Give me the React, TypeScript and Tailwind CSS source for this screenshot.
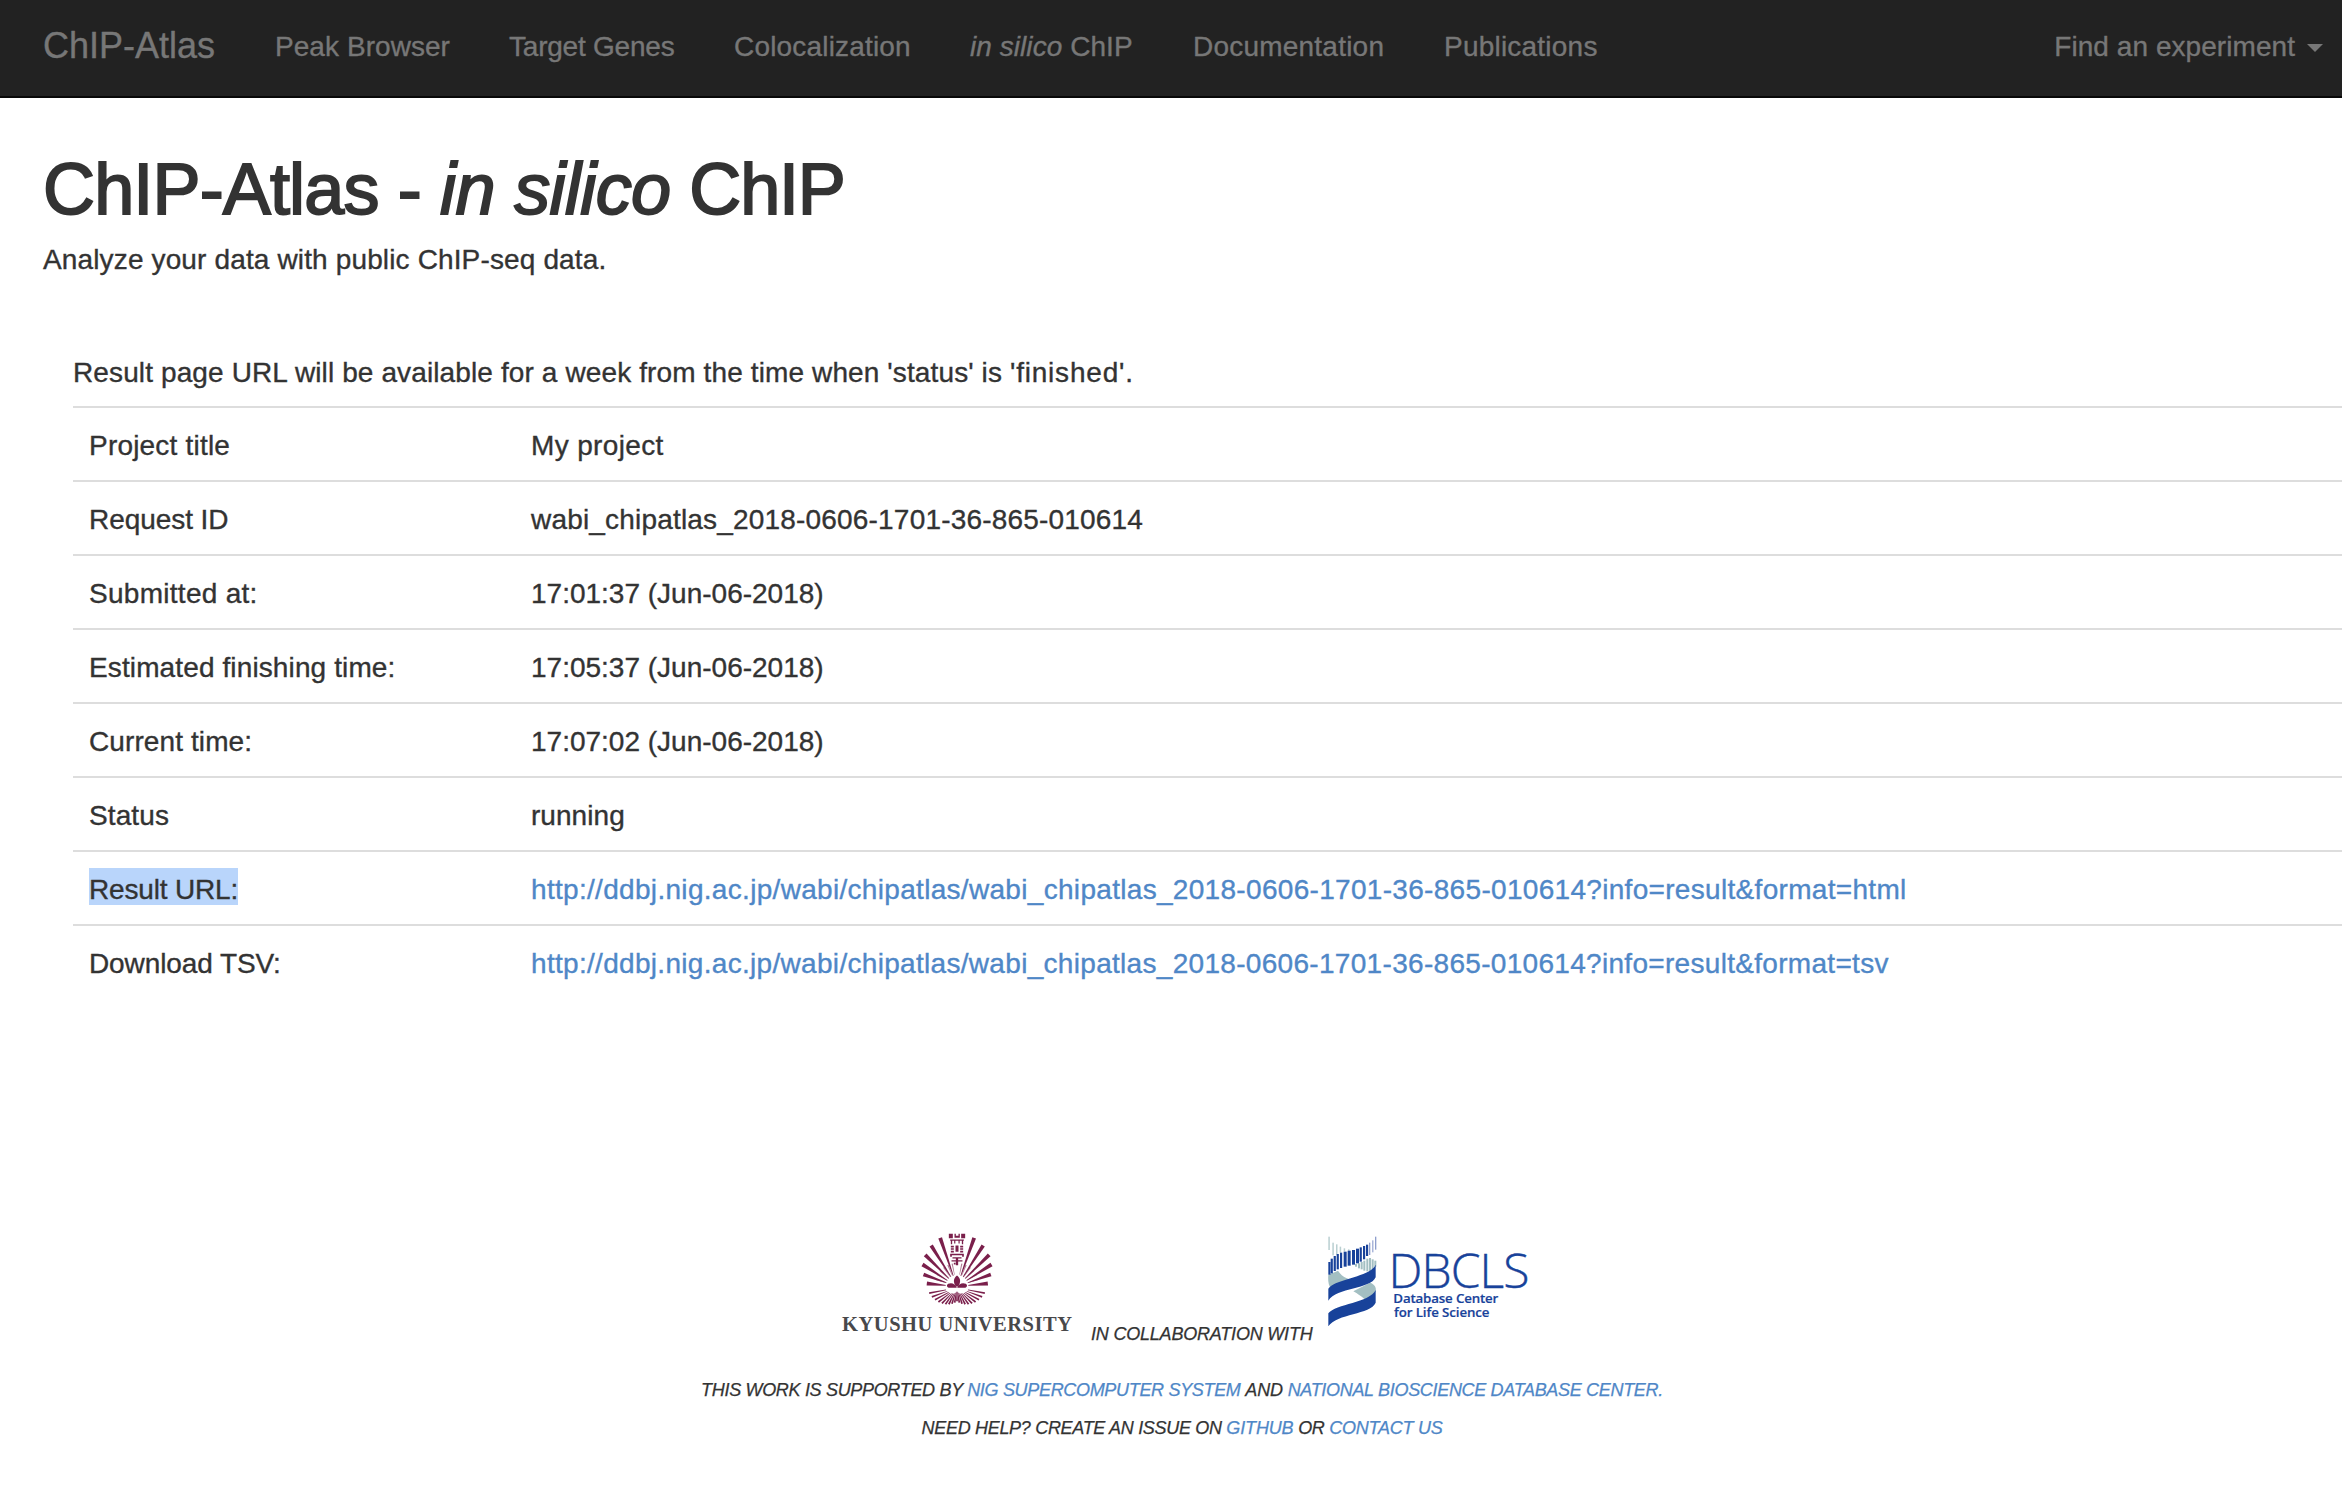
import React from "react";

const MAROON = "#7a1f4b";
const BLUE = "#18429a";
const TEAL = "#a3bfc2";

const navItems: { label: React.ReactNode; cls: string }[] = [
  { label: "Peak Browser", cls: "w-[174px] tracking-[0.06px]" },
  { label: "Target Genes", cls: "w-[165px] tracking-[-0.22px]" },
  { label: "Colocalization", cls: "w-[176px] tracking-[0.18px]" },
  { label: (<><i>in silico</i> ChIP</>), cls: "w-[163px] tracking-[0.06px]" },
  { label: "Documentation", cls: "w-[191px] tracking-[0.22px]" },
  { label: "Publications", cls: "w-[154px] tracking-[0.22px]" },
];

const RESULT_URL = "http://ddbj.nig.ac.jp/wabi/chipatlas/wabi_chipatlas_2018-0606-1701-36-865-010614?info=result&format=";

const rows: { name: string; nameCls: string; value: string; valueCls: string; link?: boolean; selected?: boolean }[] = [
  { name: "Project title", nameCls: "tracking-[0.2px]", value: "My project", valueCls: "tracking-[0.35px]" },
  { name: "Request ID", nameCls: "tracking-[-0.06px]", value: "wabi_chipatlas_2018-0606-1701-36-865-010614", valueCls: "tracking-[0.186px]" },
  { name: "Submitted at:", nameCls: "tracking-[0.28px]", value: "17:01:37 (Jun-06-2018)", valueCls: "" },
  { name: "Estimated finishing time:", nameCls: "tracking-[0.12px]", value: "17:05:37 (Jun-06-2018)", valueCls: "" },
  { name: "Current time:", nameCls: "tracking-[0.1px]", value: "17:07:02 (Jun-06-2018)", valueCls: "" },
  { name: "Status", nameCls: "tracking-[0.1px]", value: "running", valueCls: "tracking-[0.05px]" },
  { name: "Result URL:", nameCls: "tracking-[-0.17px]", value: RESULT_URL + "html", valueCls: "tracking-[0.31px]", link: true, selected: true },
  { name: "Download TSV:", nameCls: "tracking-[-0.1px]", value: RESULT_URL + "tsv", valueCls: "tracking-[0.307px]", link: true },
];

function Link({ children, className = "" }: { children: React.ReactNode; className?: string }) {
  return <a href="#" className={`text-[#4f87c7] ${className}`}>{children}</a>;
}

/* Tapered ray pointing from (cx, cy) to a tip; units are a third of a pixel. */
function ray(cx: number, cy: number, tx: number, ty: number, start: number, w0: number, w1: number) {
  const dx = tx - cx;
  const dy = ty - cy;
  const len = Math.hypot(dx, dy);
  const ux = dx / len;
  const uy = dy / len;
  const sx = cx + ux * start;
  const sy = cy + uy * start;
  const p = (x: number, y: number, w: number) => `${(x - uy * w).toFixed(1)},${(y + ux * w).toFixed(1)}`;
  return [p(sx, sy, w0), p(tx, ty, w1), p(tx, ty, -w1), p(sx, sy, -w0)].join(" ");
}

const tips: [number, number][] = [
  [52, 177], [42, 150], [39, 120], [47, 91], [65, 63], [92, 40],
  [194, 40], [221, 63], [239, 91], [246, 120], [244, 150], [235, 177],
];

function KyushuLogo() {
  return (
    <svg width="250" height="115" viewBox="835 1225 250 115" role="img" aria-label="Kyushu University" className="not-italic">
      <g transform="translate(910.5 1224.5) scale(0.33333)" fill={MAROON}>
        {tips.map(([x, y], i) => (
          <polygon key={i} points={ray(142.5, 186, x, y, 34, 1, 5.8)} />
        ))}
        {[-72, -59, -47, -35, -23, -12, 12, 23, 35, 47, 59, 72].map((a) => {
          const r = (a * Math.PI) / 180;
          return <polygon key={a} opacity="0.6" points={ray(142.5, 186, 142.5 + Math.sin(r) * 70, 186 - Math.cos(r) * 70, 36, 0.8, 1.8)} />;
        })}
        {Array.from({ length: 19 }, (_, i) => {
          const k = i - 9;
          const a = (k * 8.8 * Math.PI) / 180;
          const r = 40 + Math.abs(k) * 5;
          return <polygon key={i} points={ray(142.5, 190, 142.5 + Math.sin(a) * r, 190 + Math.cos(a) * r, 11 + Math.abs(k) * 2.5, 1, 2.7)} />;
        })}
        {/* tower */}
        <path d="M118 28h12v13h-12zM155 28h12v13h-12zM135 28h4v6h8v-6h4v12h-16z" />
        <path d="M122 45h41v3.500h-41zM124 48h4v11h-4zM157 48h4v11h-4zM134 48h3.500v9h-3.500zM147 48h3.500v9h-3.500z" />
        <path d="M124 64h9v5h-9zM138 63h9v19h-9zM152 64h9v5h-9zM124 71h9v5h-9zM152 71h9v5h-9zM124 79h9v5h-9zM152 79h9v5h-9z" />
        <path d="M122 88h41v9h-5v-5h-31v5h-5zM129 98h27v4h-27zM139 100h7v22h-7zM126 107h33v4h-33zM133 115h5v5h-5z" />
        {/* flower */}
        <path d="M142.500 153c11 8 12 19 4 33h-8c-8-14-7-25 4-33z" />
        <path d="M116 178c9-5 22-1 26 12h-24c-7-2-7-9-2-12zM169 178c-9-5-22-1-26 12h24c7-2 7-9 2-12z" />
      </g>
      <text x="843" y="1330.500" textLength="230" fontSize="20.500" fontWeight="700" fontFamily="'Liberation Serif', serif" fill="#48484a">
        KYUSHU UNIVERSITY
      </text>
    </svg>
  );
}

const darkBars: [number, number, number][] = [
  [25, 96, 134], [32, 86, 130], [41, 78, 123], [50, 72, 118], [60, 68, 114], [71, 65, 110],
  [83, 62, 107], [96, 60, 104], [108, 56, 100], [119, 52, 95], [129, 48, 88], [138, 44, 78],
];
const leftBars: [number, number, number][] = [[25, 20, 60], [37, 38, 76], [48, 43, 74], [59, 50, 68], [71, 55, 64], [84, 58, 62]];
const rightBars: [number, number, number][] = [[147, 38, 75], [165, 20, 59]];
const lowBars: [number, number, number][] = [
  [105, 102, 110], [114, 100, 115], [122, 96, 118], [130, 92, 122], [139, 86, 124], [147, 84, 124], [155, 88, 118], [163, 92, 110],
];

function DbclsLogo() {
  return (
    <svg width="208" height="110" viewBox="1322 1230 208 110" role="img" aria-label="DBCLS" className="not-italic">
      <g transform="translate(1320 1230) scale(0.33333)">
        <path d="M25 134C34 130 46 126 54 122C66 142 92 152 118 154L60 176L30 172C24 160 24 146 25 134Z" fill={TEAL} />
        <path d="M100 184L150 158C164 162 170 174 167 184C162 198 148 206 134 208C128 202 114 192 100 184Z" fill={TEAL} />
        {leftBars.map(([x, a, b]) => <rect key={x} x={x} y={a} width="4.500" height={b - a} fill={TEAL} opacity="0.75" />)}
        {lowBars.map(([x, a, b]) => <rect key={x} x={x} y={a} width="6" height={b - a} fill={TEAL} />)}
        <rect x="156" y="31" width="4.500" height="36" fill="#aab6da" />
        {rightBars.map(([x, a, b]) => <rect key={x} x={x} y={a} width="4" height={b - a} fill="#8f9fcd" />)}
        {darkBars.map(([x, a, b], i) => <rect key={x} x={x} y={a} width={i > 4 && i < 9 ? 9 : 6.5} height={b - a} fill={BLUE} />)}
        <path d="M25 212V176C46 146 150 142 167 104V142C152 178 50 172 25 212Z" fill={BLUE} />
        <path d="M25 289V250C46 222 150 218 167 180V218C152 254 50 250 25 289Z" fill={BLUE} />
      </g>
      <g fill={BLUE} fontFamily="'Open Sans', 'Noto Sans', sans-serif">
        <text x="1388.500" y="1287.700" textLength="141" fontSize="48" fontWeight="300" stroke={BLUE} strokeWidth="0.400">DBCLS</text>
        <text x="1393.300" y="1302.500" textLength="105" fontSize="13.300" fontWeight="600" stroke={BLUE} strokeWidth="0.200">Database Center</text>
        <text x="1394" y="1316.800" textLength="95.500" fontSize="13.300" fontWeight="600" stroke={BLUE} strokeWidth="0.200">for Life Science</text>
      </g>
    </svg>
  );
}

export default function App() {
  return (
    <div className="h-[1486px] w-[2342px] overflow-hidden bg-white font-['Liberation_Sans',Arial,sans-serif] text-[28px] leading-10 text-[#333]">
      <nav className="flex h-[98px] items-start border-b-2 border-[#080808] bg-[#222] pt-[27px] pr-[19px] pl-[43px] whitespace-nowrap text-[#777] [-webkit-text-stroke:0.35px]">
        <a href="#" className="-mt-px w-[172px] text-[36px] leading-10">ChIP-Atlas</a>
        <ul className="ml-[60px] flex gap-[60px]">
          {navItems.map((item, i) => (
            <li key={i} className={item.cls}>{item.label}</li>
          ))}
        </ul>
        <div className="ml-auto flex tracking-[0.06px]">
          Find an experiment
          <span className="mt-[17px] ml-3 h-0 w-0 border-x-8 border-t-8 border-x-transparent border-t-[#777]" />
        </div>
      </nav>

      <main>
        <header className="pt-[52px] pl-[43px]">
          <h1 className="text-[72px] leading-[79px] tracking-[-0.85px] whitespace-pre [-webkit-text-stroke:1.9px_#333]">
            ChIP-Atlas - <i className="tracking-[-0.62px]">in silico</i>
            <span className="tracking-[-1.2px]"> ChIP</span>
          </h1>
          <p className="mt-[11px] tracking-[0.14px] [-webkit-text-stroke:0.35px]">Analyze your data with public ChIP-seq data.</p>
        </header>

        <section className="mt-[73px] pl-[73px] [-webkit-text-stroke:0.35px]">
          <p className="tracking-[0.12px]">
            Result page URL will be available for a week from the time when 'status' is{" "}
            <span className="tracking-[0.8px]">'finished'.</span>
          </p>
          <dl className="mt-[13px]">
            {rows.map((row) => (
              <div key={row.name} className="flex h-[74px] border-t-2 border-[#ddd] pt-[18px] pl-4 whitespace-nowrap">
                <dt className="w-[442px]">
                  {row.selected ? (
                    <span className={`-mt-0.5 block h-[37px] w-[149px] bg-[#b9d5fb] pt-0.5 ${row.nameCls}`}>{row.name}</span>
                  ) : (
                    <span className={row.nameCls}>{row.name}</span>
                  )}
                </dt>
                <dd className={row.valueCls}>{row.link ? <Link>{row.value}</Link> : row.value}</dd>
              </div>
            ))}
          </dl>
        </section>
      </main>

      <footer className="mt-[227px] flex flex-col items-center pr-[21px] pl-[43px] text-[18px] leading-[26px] whitespace-nowrap italic">
        <div className="flex h-[115px] items-end">
          <KyushuLogo />
          <span className="-mb-[7px] ml-[7px] w-[231px] tracking-[-0.2px] [-webkit-text-stroke:0.25px]">IN COLLABORATION WITH</span>
          <DbclsLogo />
        </div>
        <p className="mt-[37px] tracking-[-0.32px] [-webkit-text-stroke:0.25px]">
          THIS WORK IS SUPPORTED BY <Link>NIG SUPERCOMPUTER SYSTEM</Link> <span className="tracking-[-0.1px]">AND</span>{" "}
          <Link>NATIONAL BIOSCIENCE DATABASE CENTER.</Link>
        </p>
        <p className="mt-3 tracking-[-0.31px] [-webkit-text-stroke:0.25px]">
          NEED HELP? CREATE AN ISSUE ON <Link className="tracking-[-0.15px]">GITHUB</Link> OR{" "}
          <Link className="tracking-[-0.25px]">CONTACT US</Link>
        </p>
      </footer>
    </div>
  );
}
